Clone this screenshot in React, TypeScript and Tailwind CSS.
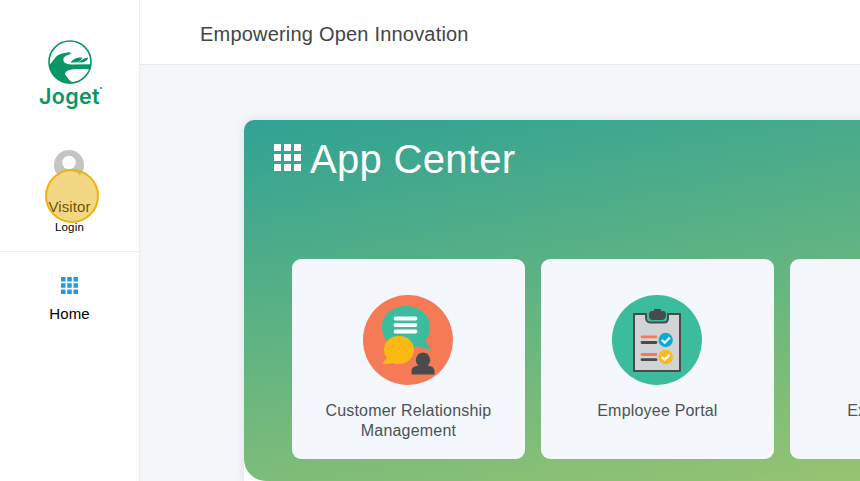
import type { ReactNode } from 'react';

function Grid({ className, unit, gap }: { className: string; unit: number; gap: number }) {
  const size = unit * 3 + gap * 2;
  const steps = [0, unit + gap, 2 * (unit + gap)];
  return (
    <svg className={className} viewBox={`0 0 ${size} ${size}`} fill="currentColor">
      {steps.map((y) => steps.map((x) => <rect key={`${x}-${y}`} x={x} y={y} width={unit} height={unit} />))}
    </svg>
  );
}

function Logo() {
  return (
    <div className="flex h-[70px] w-full flex-col items-center text-[#079763]">
      <svg className="ml-px size-11 shrink-0" viewBox="0 0 44 44">
        <circle cx="22" cy="22" r="21" fill="#fff" stroke="currentColor" strokeWidth="1.6" />
        <path d="M1 25 C4 23 5.5 19.5 8 16.8 C11.5 13.2 17 13.2 21.3 12.3 C23 12.2 23.2 14 21.5 14.6 C18 15.6 15.4 17 15.4 19.8 C15.4 22.6 18 24.3 23 24.5 L43 24.3 L42.5 29.5 C37 28.8 25 28.6 20 30.4 C16.5 32 16.6 34 18.4 36.6 C20.5 39.5 23 42 26 43 A21 21 0 0 1 1 25Z" fill="currentColor" />
        <path d="M22.5 22.5 C24.5 19.5 29 17 34 17.6 C35 18 32.5 21 30 22 C27.5 22.7 25 22.7 22.5 22.5Z M29.5 22.5 C32.5 22 34 18.2 40 17.8 C41 18.5 38 21.5 35.5 22.2 C33.5 22.7 31.5 22.6 29.5 22.5Z" fill="currentColor" />
      </svg>
      <div className="relative -mt-0.5 font-[Inter,sans-serif] text-[21.5px] leading-[28px] font-semibold tracking-[0.3px]">
        Joget
        <span className="absolute top-[5px] -right-[2px] size-[1.5px] rounded-full bg-[#079763]" />
      </div>
    </div>
  );
}

function ChatIcon() {
  return (
    <svg className="size-[90px]" viewBox="0 0 90 90">
      <circle cx="45" cy="45" r="45" fill="#f47b55" />
      <path d="M43 11 C57 11 67 20 67 32 C67 38 65 43 62 46 L68 54 C63 54 58 53 54 51 C50 54 46 54 43 54 C29 54 19 45 19 32 C19 20 29 11 43 11Z" fill="#3bbd9d" />
      <path d="M36 41 C45 41 51 47 51 55 C51 63 44 69 36 69 C33 69 31 69 29 68 C26 69 23 69 19 69 L24 63 C22 61 21 58 21 55 C21 47 27 41 36 41Z" fill="#fcb813" />
      <path d="M32.5 23.5H52.5M32.5 30H52.5M32.5 36.5H52.5" stroke="#fff" strokeWidth="3.8" strokeLinecap="round" />
      <path d="M60 57.5 A7.4 7.4 0 0 1 64.5 70.5 C69 71 71.5 73 71.5 76 V79.5 H48.5 V76 C48.5 73 51 71 55.5 70.5 A7.4 7.4 0 0 1 60 57.5Z" fill="#4a4a4d" />
    </svg>
  );
}

function ClipboardIcon() {
  return (
    <svg className="size-[90px]" viewBox="0 0 90 90">
      <circle cx="45" cy="45" r="45" fill="#3bbd9d" />
      <path d="M22 19 H34 V23 C34 26 36 27.5 38 27.5 H52 C55 27.5 56 25.5 56 23 V19 H68 V76 H22Z" fill="#d2d3d5" stroke="#4a4a4d" strokeWidth="2" strokeLinejoin="round" />
      <path d="M42 14 H49 V16 H51 C53.5 16 54 18 54 20 C54 23 52 25 50 25 H41 C38 25 37 23 37 20 C37 17.5 38 16 40 16 H42Z" fill="#4a4a4d" />
      <path d="M30 41.8H44M30 59.5H44" stroke="#f47b55" strokeWidth="2.8" strokeLinecap="round" />
      <path d="M30 47.5H44M30 64.7H44" stroke="#4a4a4d" strokeWidth="2.8" strokeLinecap="round" />
      <circle cx="53.7" cy="45" r="7.2" fill="#08aed0" />
      <circle cx="53.7" cy="62" r="7.2" fill="#fcb813" />
      <path d="M49.8 45 L52.7 47.7 L57.8 42.5M49.8 62 L52.7 64.7 L57.8 59.5" fill="none" stroke="#fff" strokeWidth="2.3" />
    </svg>
  );
}

function AppCard({ label, icon }: { label: string; icon?: ReactNode }) {
  return (
    <div className="flex h-[200.5px] w-[232.9px] shrink-0 flex-col items-center rounded-[9px] bg-[#f4f7fb] px-4 pt-9">
      <div className="size-[90px]">{icon}</div>
      <div className="mt-4 text-center text-base leading-5 tracking-[0.2px] text-[#4d5257]">{label}</div>
    </div>
  );
}

export default function App() {
  return (
    <div className="flex h-[481px] w-[860px] overflow-hidden bg-[#f4f7fa] font-['Liberation_Sans',Arial,sans-serif]">
      <aside className="flex w-[140px] shrink-0 flex-col border-r border-[#ebedef] bg-white">
        <div className="flex h-[252px] flex-col items-center border-b border-[#ebedee] pt-10">
          <Logo />
          <div className="relative mt-10 flex flex-col items-center">
            <svg className="mr-px size-[30px]" viewBox="0 0 30 30">
              <circle cx="15" cy="15" r="15" fill="#c4c4c4" />
              <circle cx="15" cy="12.5" r="6.8" fill="#fff" />
              <path d="M4 27 C5 19 25 19 26 27 L22 30 H8Z" fill="#fff" />
            </svg>
            <div className="mt-[18px] text-[15px] leading-[18px] tracking-[0.1px] text-black">Visitor</div>
            <div className="mt-1 text-[11.5px] leading-[14px] tracking-[0.2px] text-black">Login</div>
            <div className="absolute top-[19px] left-1/2 ml-[-24.5px] size-[54px] rounded-full border-2 border-[#f0b10b] bg-[#e4ab00]/48" />
          </div>
        </div>
        <div className="flex flex-col items-center pt-[25px]">
          <Grid className="size-[17px] text-[#1b9edc]" unit={4.5} gap={1.75} />
          <div className="mt-[11px] text-[15px] leading-[18px] tracking-[0.1px] text-black">Home</div>
        </div>
      </aside>
      <div className="flex min-w-0 flex-1 flex-col">
        <header className="flex h-[65px] shrink-0 items-center border-b border-[#e8ebee] bg-white pt-[3px] pl-[60px] text-xl tracking-[0.2px] text-[#414549]">
          Empowering Open Innovation
        </header>
        <main className="pt-[55px] pl-[104px]">
          <div className="w-[760px] rounded-t-[10px] bg-white shadow-[0_0_10px_rgba(60,80,100,0.14)]">
            <section className="h-[361px] rounded-t-[10px] rounded-b-[22px] bg-[linear-gradient(170deg,#30a294_0%,#64b581_50%,#9cc56f_100%)] pt-[19px] pl-[30px]">
              <div className="flex h-[40px] items-center gap-[9px] text-white">
                <Grid className="mb-[3px] size-[27px]" unit={7} gap={3} />
                <h1 className="text-[40px] leading-[40px] tracking-[0.3px]">App Center</h1>
              </div>
              <div className="mt-[79.5px] ml-[18px] flex gap-[16.1px]">
                <AppCard label="Customer Relationship Management" icon={<ChatIcon />} />
                <AppCard label="Employee Portal" icon={<ClipboardIcon />} />
                <AppCard label="Expenses Claim" />
              </div>
            </section>
          </div>
        </main>
      </div>
    </div>
  );
}
